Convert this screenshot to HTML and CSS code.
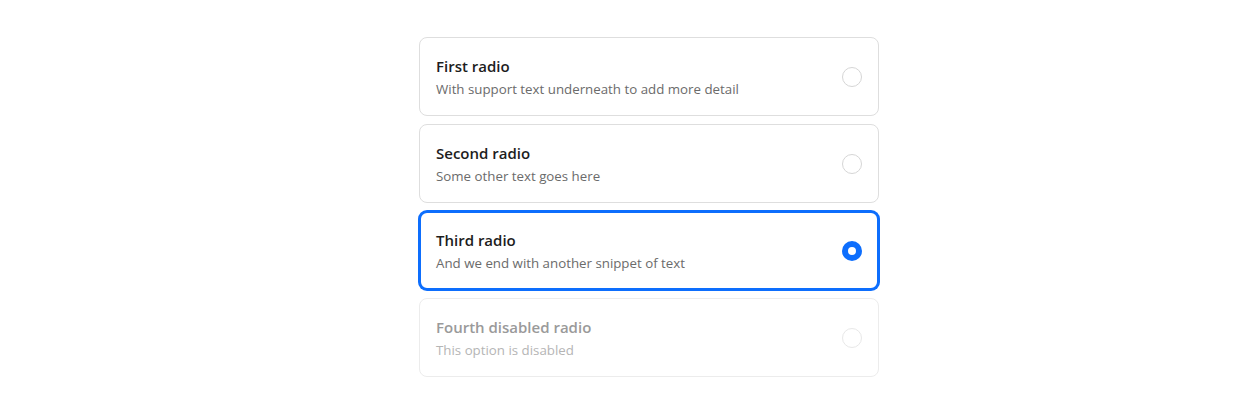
FILE: index.html
```html
<!DOCTYPE html>
<html>
<head>
<meta charset="utf-8">
<link rel="stylesheet" href="styles.css">
</head>
<body>
<div class="page">
  <div class="group">
    <label class="card">
      <div class="text">
        <div class="title">First radio</div>
        <div class="sub">With support text underneath to add more detail</div>
      </div>
      <span class="radio"></span>
    </label>
    <label class="card">
      <div class="text">
        <div class="title">Second radio</div>
        <div class="sub">Some other text goes here</div>
      </div>
      <span class="radio"></span>
    </label>
    <label class="card selected">
      <div class="text">
        <div class="title">Third radio</div>
        <div class="sub">And we end with another snippet of text</div>
      </div>
      <span class="radio checked"></span>
    </label>
    <label class="card disabled">
      <div class="text">
        <div class="title">Fourth disabled radio</div>
        <div class="sub">This option is disabled</div>
      </div>
      <span class="radio"></span>
    </label>
  </div>
</div>
</body>
</html>
```
FILE: styles.css
```css
html, body {
  margin: 0;
  padding: 0;
  background: #ffffff;
}
body {
  font-family: "Open Sans", "Noto Sans", sans-serif;
}
.page {
  display: flex;
  justify-content: center;
  padding-top: 37px;
  padding-left: 51px;
}
.group {
  width: 460px;
  display: flex;
  flex-direction: column;
  gap: 8px;
}
.card {
  box-sizing: border-box;
  height: 79px;
  border: 1px solid #dedede;
  border-radius: 8px;
  padding: 16px;
  display: flex;
  align-items: center;
  justify-content: space-between;
  background: #fff;
}
.text {
  display: flex;
  flex-direction: column;
  gap: 1px;
}
.title {
  font-size: 15px;
  font-weight: 600;
  line-height: 24px;
  color: #1d1d1d;
}
.sub {
  font-size: 13.3px;
  line-height: 20px;
  color: #6b6b6b;
}
.radio {
  box-sizing: border-box;
  width: 20px;
  height: 20px;
  border-radius: 50%;
  border: 1px solid #d6d6d6;
  background: #fff;
  flex: none;
}
.radio.checked {
  border: 6px solid #0d6efd;
}
.selected {
  border: 2px solid #0d6efd;
  padding: 15px;
  box-shadow: 0 0 0 1px #0d6efd;
}
.disabled {
  border-color: #ececec;
}
.disabled .title {
  color: #9a9a9a;
}
.disabled .sub {
  color: #b5b5b5;
}
.disabled .radio {
  border-color: #e8e8e8;
}
```
